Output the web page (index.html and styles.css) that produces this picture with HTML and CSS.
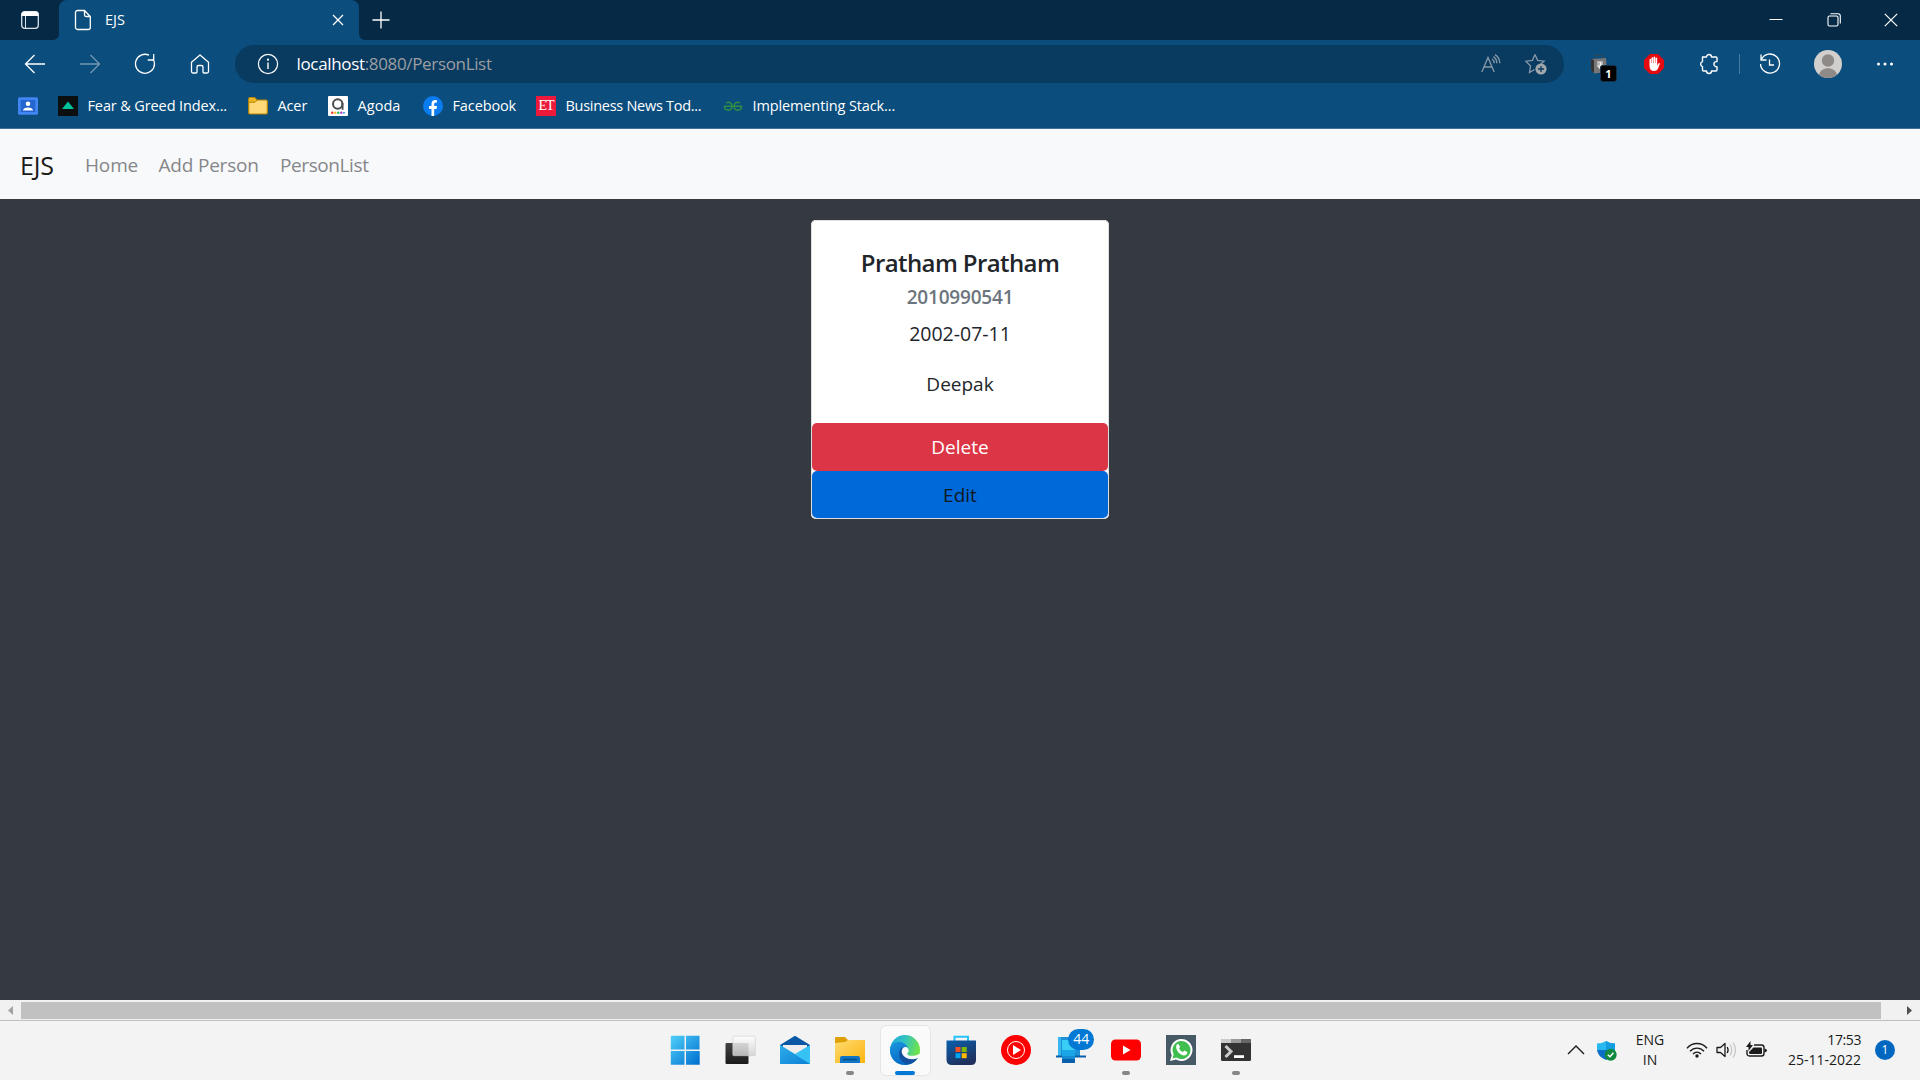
FILE: index.html
```html
<!DOCTYPE html>
<html lang="en">
<head>
<meta charset="utf-8">
<title>EJS</title>
<link rel="stylesheet" href="styles.css">
</head>
<body>
<header class="titlebar">
  <div class="tab-actions">
    <svg width="20" height="20" viewBox="0 0 20 20"><rect x="1.7" y="1.7" width="16.6" height="16.6" rx="3" fill="none" stroke="#dbe2e8" stroke-width="1.3"/><path d="M1.5 6V4.5a3 3 0 0 1 3-3h11a3 3 0 0 1 3 3V6z" fill="#fff"/><path d="M5.5 6v12" stroke="#dbe2e8"/></svg>
  </div>
  <div class="tab">
    <svg width="18" height="22" viewBox="0 0 18 22" fill="none" stroke="#fff" stroke-width="1.3"><path d="M3.5 1.5h7l5.800 6v11a2 2 0 0 1-2 2H3.500a2 2 0 0 1-2-2v-15a2 2 0 0 1 2-2zM10.500 1.500v4.500a1.500 1.500 0 0 0 1.500 1.500h4.300"/></svg>
    <span class="tab-title">EJS</span>
    <svg class="tab-close" width="12" height="12" viewBox="0 0 12 12"><path d="M1 1l10 10M11 1L1 11" stroke="#fff" stroke-width="1.3"/></svg>
  </div>
  <svg class="new-tab" width="18" height="18" viewBox="0 0 18 18"><path d="M9 .5v17M.5 9h17" stroke="#fff" stroke-width="1.3"/></svg>
  <div class="window-buttons">
    <svg width="14" height="14" viewBox="0 0 14 14"><path d="M.5 6.500h13" stroke="#fff"/></svg>
    <svg width="14" height="14" viewBox="0 0 14 14" fill="none" stroke="#fff" stroke-width="1.1"><rect x="1" y="3" width="10" height="10" rx="1.500"/><path d="M3.500.8h7.500a2.300 2.300 0 0 1 2.300 2.300v7.400"/></svg>
    <svg width="14" height="14" viewBox="0 0 14 14"><path d="M.8.8l12.400 12.400M13.200.8L.8 13.200" stroke="#fff" stroke-width="1.2"/></svg>
  </div>
</header>

<div class="toolbar">
  <div class="tool"><svg width="22" height="20" viewBox="0 0 22 20" fill="none" stroke="#fff" stroke-width="1.300"><path d="M21 10H1.500M10.500 1l-9 9 9 9"/></svg></div>
  <div class="tool faded"><svg width="22" height="20" viewBox="0 0 22 20" fill="none" stroke="#fff" stroke-width="1.300"><path d="M1 10h19.500M11.500 1l9 9-9 9"/></svg></div>
  <div class="tool"><svg width="22" height="22" viewBox="0 0 22 22" fill="none" stroke="#fff" stroke-width="1.300"><path d="M15 2.200A9.500 9.500 0 1 0 20.500 11a9.500 9.500 0 0 0-1.700-5.200M19.700 1v6h-6"/></svg></div>
  <div class="tool"><svg width="20" height="20" viewBox="0 0 20 20" fill="none" stroke="#fff" stroke-width="1.300"><path d="M1.500 8.200L10 1l8.500 7.200V17.500a1.500 1.500 0 0 1-1.500 1.500h-3a1 1 0 0 1-1-1v-5a1.500 1.500 0 0 0-1.500-1.500h-3A1.500 1.500 0 0 0 7 13v5a1 1 0 0 1-1 1H3a1.500 1.500 0 0 1-1.500-1.500z" stroke-linejoin="round"/></svg></div>
  <div class="address">
    <svg width="22" height="22" viewBox="0 0 22 22" fill="none" stroke="#fff" stroke-width="1.200"><circle cx="11" cy="11" r="9.600"/><path d="M11 9.500v6.500" stroke-width="1.400"/><circle cx="11" cy="6.700" r=".5" fill="#fff"/></svg>
    <span class="url"><b>localhost</b>:8080/PersonList</span>
    <svg class="read" width="20" height="20" viewBox="0 0 20 20" fill="none" stroke="#8799a8" stroke-width="1.300"><path d="M.8 18L7 3.500 13.200 18M3 13h8M11 5c1.500 1 2.200 2.300 2.200 4.300M12.500 2.600c2.300 1.600 3.300 3.600 3.300 6.700M14 .6c3.200 2 4.800 5 4.800 8.700"/></svg>
    <svg class="fav" width="22" height="22" viewBox="0 0 22 22"><path d="M10 1.500l2.600 5.800 6.500.8-4 3.700M9.500 16.500l-5 3 1-6.500L.9 8.200l6.500-.9L10 1.500" fill="none" stroke="#8799a8" stroke-width="1.300"/><circle cx="16" cy="16" r="5.600" fill="#a0a6ab"/><path d="M16 13v6M13 16h6" stroke="#0a3a5f" stroke-width="1.300"/></svg>
  </div>
  <div class="extension">
    <svg width="18" height="20" viewBox="0 0 18 20"><path d="M5 5V1.500h8V5" stroke="#444" fill="none" stroke-dasharray="2 1"/><path d="M1 5l15-1 1 14-13 1.500L1 15z" fill="#777"/><path d="M1 5l3 1v13l-3-3z" fill="#333"/><path d="M7 8h6M7 10h6M8 8c4 0 4 4 0 4l3.500 4" fill="none" stroke="#eee" stroke-width="1.200"/></svg>
    <span class="ext-badge">1</span>
  </div>
  <div class="tool"><svg width="20" height="20" viewBox="0 0 20 20"><path d="M6 0h8l6 6v8l-6 6H6l-6-6V6z" fill="#e40b10"/><path d="M5.500 10.500V5.200q.8-.9 1.500 0V9l.4 0V3.700q.9-1 1.700 0V9h.4V3q.9-.9 1.700 0v6h.4V4q.9-.9 1.600 0v7.500l1.200-2q1-1 1.600.1L13.800 15q-1 2-3.600 2-4.700 0-4.700-5z" fill="#fff"/></svg></div>
  <div class="tool"><svg width="20" height="22" viewBox="0 0 20 22" fill="none" stroke="#fff" stroke-width="1.400" stroke-linejoin="round"><path d="M3.500 4H7.500a2.500 2.500 0 0 1 5 0H17q1 0 1 1v3.600h-1a2.600 2.600 0 0 0 0 5.100h1V17q0 1-1 1h-4.500a2.500 2.500 0 0 1-5 0H4.500q-1 0-1-1v-3.400a2.600 2.600 0 0 1 0-5V4z"/></svg></div>
  <i class="divider"></i>
  <div class="tool history"><svg width="22" height="22" viewBox="0 0 22 22" fill="none" stroke="#fff" stroke-width="1.300"><path d="M2 1.500V7h5.500M2.300 6.700A9.500 9.500 0 1 1 1.500 11M10.500 6.500V12h4.500"/></svg></div>
  <div class="avatar"><svg width="28" height="28" viewBox="0 0 28 28"><circle cx="14" cy="14" r="14" fill="#d2d0ce"/><circle cx="14" cy="10.500" r="6.200" fill="#8d8a88"/><path d="M5 24.700c1-4.200 4.500-6.500 9-6.500s8 2.300 9 6.500a14 14 0 0 1-18 0z" fill="#8d8a88"/></svg></div>
  <div class="tool"><svg width="18" height="4" viewBox="0 0 18 4" fill="#fff"><circle cx="2.500" cy="2" r="1.500"/><circle cx="9" cy="2" r="1.500"/><circle cx="15.500" cy="2" r="1.500"/></svg></div>
</div>

<nav class="bookmarks">
  <a class="bm bm-contact"><svg width="20" height="20" viewBox="0 0 20 20"><rect y="1.300" width="20" height="17.400" rx="1.500" fill="#4285f4"/><rect x="2.700" y="4" width="14.600" height="12" fill="#2565cf"/><circle cx="10" cy="7.700" r="2.300" fill="#fff"/><path d="M5 14.500c0-4 10-4 10 0z" fill="#fff"/></svg></a>
  <a class="bm bm-fear"><svg width="20" height="20" viewBox="0 0 20 20"><path d="M0 0h20v20H0z" fill="#0b0f10"/><path d="M10 5.500l6 7.500H4z" fill="#00c29a"/></svg><span>Fear &amp; Greed Index...</span></a>
  <a class="bm bm-acer"><svg width="20" height="20" viewBox="0 0 20 20"><path d="M.7 3q0-1.300 1.300-1.300h4.500L9 4h9q1.300 0 1.300 1.300v11.400q0 1.300-1.300 1.300H2q-1.300 0-1.300-1.300z" fill="#ffd977" stroke="#b98400" stroke-width="1.200"/><path d="M1.300 2.300h5L8 4 6.500 6H1.300z" fill="#e9b422"/><path d="M1 6.300h6L9 4" fill="none" stroke="#b98400"/></svg><span>Acer</span></a>
  <a class="bm bm-agoda"><svg width="20" height="20" viewBox="0 0 20 20"><rect width="20" height="20" rx="1" fill="#fff"/><circle cx="9.700" cy="8" r="4.700" fill="none" stroke="#4c4d4f" stroke-width="2"/><path d="M14.600 7v6.800" stroke="#4c4d4f" stroke-width="1.800"/><g><circle cx="4.300" cy="16.700" r="1.200" fill="#e32"/><circle cx="7.300" cy="16.700" r="1.200" fill="#fb2"/><circle cx="10.300" cy="16.700" r="1.200" fill="#2b5"/><circle cx="13.300" cy="16.700" r="1.200" fill="#a4c"/><circle cx="16" cy="16.700" r="1" fill="#39d"/></g></svg><span>Agoda</span></a>
  <a class="bm bm-facebook"><svg width="20" height="20" viewBox="0 0 20 20"><circle cx="10" cy="10" r="10" fill="#0a7cf0"/><path d="M8.500 20v-7H6v-3h2.500V7.800C8.500 5.300 10 4 12.200 4l1.800.2v2.400h-1.300q-1.500 0-1.500 1.500V10H14l-.5 3h-2.300v7z" fill="#fff"/></svg><span>Facebook</span></a>
  <a class="bm bm-news"><span class="et-logo">ET</span><span>Business News Tod...</span></a>
  <a class="bm bm-stack"><svg width="20" height="20" viewBox="0 0 20 20" fill="none" stroke="#2f8d46" stroke-width="1.500"><path d="M3 7.200c3-2 6-.3 6 3s-2.500 4.300-4.700 3.800S1.300 12 1.500 10.300h17c.2 1.700-.600 3.200-2.800 3.700S11 13.500 11 10.200s3-5 6-3"/></svg><span>Implementing Stack...</span></a>
</nav>

<main class="page">
  <nav class="navbar">
    <a class="brand">EJS</a><a class="nl n1">Home</a><a class="nl n2">Add Person</a><a class="nl">PersonList</a>
  </nav>
  <section class="card">
    <div class="card-body">
      <h5>Pratham Pratham</h5>
      <h6>2010990541</h6>
      <p class="dob">2002-07-11</p>
      <p class="guardian">Deepak</p>
    </div>
    <a class="btn btn-danger">Delete</a>
    <a class="btn btn-primary">Edit</a>
  </section>
</main>

<div class="scrollbar">
  <svg width="21" height="20" viewBox="0 0 21 20"><path d="M13 6v9l-5-4.500z" fill="#a3a3a3"/></svg>
  <i class="thumb"></i>
  <svg width="39" height="20" viewBox="0 0 39 20"><path d="M26 6v9l5-4.500z" fill="#505050"/></svg>
</div>

<footer class="taskbar">
  <div class="apps">
    <div class="app"><svg width="30" height="30" viewBox="0 0 30 30"><defs><linearGradient id="win" x1="0" y1="0" x2="29" y2="29" gradientUnits="userSpaceOnUse"><stop offset="0" stop-color="#52d3fb"/><stop offset="1" stop-color="#0070d0"/></linearGradient></defs><path d="M1.500.8H14.500V14.500H.8v-13zM16 .8h13.500v13.700H16zM.8 16h13.700v13.700H.8zM16 16h13.700v13.700H16z" fill="url(#win)"/></svg></div>
    <div class="app"><svg width="32" height="30" viewBox="0 0 32 30"><defs><linearGradient id="tv" x2="0" y2="1"><stop stop-color="#444"/><stop offset="1" stop-color="#1a1a1a"/></linearGradient><linearGradient id="tv2" x2="0" y2="1"><stop stop-color="#fff" stop-opacity=".85"/><stop offset="1" stop-color="#d0d0d0" stop-opacity=".85"/></linearGradient></defs><rect x="1.500" y="8" width="23" height="21" rx="1" fill="url(#tv)"/><rect x="8.800" y="1.200" width="22.500" height="19.500" rx="1" fill="url(#tv2)" stroke="#ccc" stroke-width=".6"/></svg></div>
    <div class="app"><svg width="30" height="30" viewBox="0 0 30 30"><defs><linearGradient id="ml" x2="1" y2="1"><stop stop-color="#2daee9"/><stop offset="1" stop-color="#0d7fd5"/></linearGradient></defs><path d="M0 10L13 2q2-2 4 0l13 8v5H0z" fill="#0a57a5"/><path d="M3 10h24v10H3z" fill="#eee"/><path d="M0 10l15 9 15-9v19H0z" fill="#36c3f4"/><path d="M0 10l30 19H0z" fill="url(#ml)"/></svg></div>
    <div class="app running"><svg width="30" height="30" viewBox="0 0 30 30"><defs><linearGradient id="fo" x2="1" y2="1"><stop stop-color="#ffdb71"/><stop offset="1" stop-color="#fbb40f"/></linearGradient></defs><path d="M0 3q0-1 1-1h9l3 3v6H0z" fill="#dfa005"/><path d="M0 8l10-1 3-2h17v23H0z" fill="url(#fo)"/><path d="M5 28v-5q0-2 2-2h16q2 0 2 2v5z" fill="#0f75c4"/><path d="M8 24.500h14" stroke="#084f8b" stroke-width="1.500"/></svg></div>
    <div class="app active"><svg width="30" height="30" viewBox="0 0 30 30"><defs><linearGradient id="e1" x2="1" y2=".3"><stop stop-color="#1ba5df"/><stop offset=".5" stop-color="#32c3c0"/><stop offset="1" stop-color="#70e349"/></linearGradient><linearGradient id="e2" x2=".5" y2="1"><stop stop-color="#1996df"/><stop offset="1" stop-color="#0768c5"/></linearGradient></defs><circle cx="15" cy="15" r="15" fill="url(#e1)"/><path d="M0 14C1 8.500 6 6.500 10 7c5 .5 8 4 8 7.500-2-2-5-1.500-6 1-1 3 1 7 5.500 8.500 4.300 1 8.500-.5 10.500-1.500C25 27.500 20.500 30 15 30 6 30-.5 23 0 14z" fill="url(#e2)"/><path d="M12 12.500C7.500 16 8 25.500 15.500 28.500c5 1.500 9.500-1.500 12.500-6-4 2-10 2-13-1.500-3-3-3-6-1.500-8.500z" fill="#124f9e"/><path d="M11.700 16c.4-4 5-5.500 6.700-1.800.8 2-.5 3.300-1.200 4.300-.5 2.500 6 3.500 11.800.4l1.500 1q-1 2-2.500 3c-3.300 1.600-7 1.600-10.300.6-4-1.500-6.300-4.500-6-7.500z" fill="#fafafa"/></svg></div>
    <div class="app"><svg width="30" height="30" viewBox="0 0 30 30"><defs><linearGradient id="st" x2=".5" y2="1"><stop stop-color="#0a5fae"/><stop offset="1" stop-color="#20305c"/></linearGradient></defs><path d="M8.500 6V1.800h13.500V6" fill="none" stroke="#24c3fa" stroke-width="2"/><path d="M.5 5.500h29.500V25q0 5-5 5H6q-5.500 0-5.500-5z" fill="url(#st)"/><path d="M9.500 12h5v5h-5z" fill="#f25022"/><path d="M15.700 12h5v5h-5z" fill="#7fba00"/><path d="M9.500 18.200h5v5h-5z" fill="#00a4ef"/><path d="M15.700 18.200h5v5h-5z" fill="#ffb900"/></svg></div>
    <div class="app"><svg width="30" height="30" viewBox="0 0 30 30"><circle cx="15" cy="15" r="15" fill="#f00"/><circle cx="15" cy="15" r="8.500" fill="none" stroke="#fff" stroke-width="1"/><path d="M12 10l8 5-8 5z" fill="#fff"/></svg></div>
    <div class="app"><svg width="30" height="30" viewBox="0 0 30 30"><path d="M2 2h22v20H2z" fill="#1c91d6"/><path d="M2 2h3v20H2z" fill="#36b5ee"/><path d="M0 20.500h30V22.500H0z" fill="#075fab"/><path d="M6 6h13v22H6z" fill="#148bd3"/><path d="M6 5h13v10H6z" fill="#38cdf5"/><path d="M6 15h13v6H6z" fill="#1aa5e7"/><path d="M6 24h13v4H6z" fill="#075fab"/></svg><span class="count">44</span></div>
    <div class="app running"><svg width="30" height="30" viewBox="0 0 30 30"><rect y="4.500" width="30" height="21" rx="4.500" fill="#f00"/><path d="M12 10.500l7.500 4.500-7.500 4.500z" fill="#fff"/></svg></div>
    <div class="app"><svg width="30" height="30" viewBox="0 0 30 30"><path d="M0 0h30v30H0z" fill="#455a64"/><path d="M4 26l1.700-6A11 11 0 1 1 10 24.500z" fill="#fff"/><path d="M6.500 23.500l1.200-4A9 9 0 1 1 10.500 22.500z" fill="#3fbf4f"/><path d="M10.500 10q1-1.500 2.300-.6l1.200 2.700-1 1.500q1.200 2.600 4 3.500l1.300-1.500 3 1.400q.4 1.800-1.500 3c-3.500 2-11.300-4-9.300-10z" fill="#fff"/></svg></div>
    <div class="app running"><svg width="30" height="30" viewBox="0 0 30 30"><rect y="4" width="30" height="22" rx="1.500" fill="#333"/><path d="M0 8V5q0-1 1-1h9v4z" fill="#ccc"/><path d="M10 4h10v4H10z" fill="#999"/><path d="M20 4h9q1 0 1 1v3H20z" fill="#666"/><path d="M4.500 11l5.500 5.500-5.500 5.500" fill="none" stroke="#ccc" stroke-width="3"/><path d="M13 20.200h10v2.800H13z" fill="#fff"/></svg></div>
  </div>
  <div class="tray">
    <svg width="18" height="12" viewBox="0 0 18 12"><path d="M1 10l8-8 8 8" fill="none" stroke="#1b1b1b" stroke-width="1.400"/></svg>
    <svg class="shield" width="21" height="21" viewBox="0 0 21 21"><path d="M10 1q4 2.500 9 2.500V10H1V3.500Q6 3.500 10 1z" fill="#28b7ee"/><path d="M10 1q4 2.500 9 2.500V10h-9z" fill="#159be0"/><path d="M1 10h18q-1 7-9 10-8-3-9-10z" fill="#0c6fc7"/><circle cx="14.700" cy="14.700" r="6" fill="#10893e"/><path d="M11.800 14.800l2.200 2 3.500-4" fill="none" stroke="#fff" stroke-width="1.500"/></svg>
    <div class="lang"><span>ENG</span><span>IN</span></div>
    <svg class="wifi" width="22" height="18" viewBox="0 0 22 18" fill="none" stroke="#1b1b1b" stroke-width="1.400"><path d="M1 7.200c5.500-6.200 14.500-6.200 20 0M4 10.300c4-4.300 10-4.300 14 0M7 13c2.500-2.500 5.500-2.500 8 0"/><circle cx="11" cy="15" r="1.700" fill="#1b1b1b" stroke="none"/></svg>
    <svg class="volume" width="21" height="18" viewBox="0 0 21 18" fill="none" stroke="#1b1b1b" stroke-width="1.300"><path d="M1 6.500h3.500L9 2.500v13l-4.500-4H1z" stroke-linejoin="round"/><path d="M11.200 6q1.800 3 0 6"/><path d="M14 3.500q3.500 5.500 0 11M17 1.500q5 7.500 0 15" stroke="#c5c5c5"/></svg>
    <svg class="battery" width="21" height="18" viewBox="0 0 21 18"><path d="M8 4h7.500q2.500 0 2.500 2.500v6q0 2.500-2.500 2.500h-12Q1 15 1 12.500V9" fill="none" stroke="#1b1b1b" stroke-width="1.400"/><path d="M7.500 6.500H15q1 0 1 1v4.500q0 1-1 1H4.500q-1.500 0-1.500-1V11z" fill="#1b1b1b"/><path d="M18.500 7.500q2.500.5 2.500 2t-2.500 2zM4.500 0v4H7L2.500 10V6H0z" fill="#1b1b1b"/></svg>
    <div class="clock"><span class="time">17:53</span><span>25-11-2022</span></div>
    <span class="notice">1</span>
  </div>
</footer>
</body>
</html>
```
FILE: styles.css
```css
* { box-sizing: border-box; }
body {
  margin: 0;
  width: 1920px;
  height: 1080px;
  overflow: hidden;
  display: flex;
  flex-direction: column;
  font-family: "Open Sans", "Noto Sans", sans-serif;
  font-size: 14.500px;
  color: #fff;
  white-space: nowrap;
}
svg { display: block; flex: none; }

/* Window title bar */
.titlebar { height: 40px; flex: none; display: flex; align-items: center; background: #0b4d7d; }
.tab-actions { width: 59px; height: 40px; display: flex; align-items: center; padding-left: 20px; background: #062a46; border-radius: 0 0 6px 0; }
.tab { width: 300px; height: 40px; display: flex; align-items: center; padding: 0 15px; background: #0b4d7d; border-radius: 8px 8px 0 0; box-shadow: 0 -8px 0 #062a46; }
.tab-title { margin-left: 13px; padding-bottom: 2px; }
.tab-close { margin-left: auto; }
.titlebar .new-tab { background: #062a46; box-sizing: content-box; padding: 11px 13px; border-radius: 0 0 0 6px; }
.window-buttons { flex: 1; height: 40px; display: flex; align-items: center; justify-content: flex-end; gap: 43.500px; padding-right: 22px; background: #062a46; }

/* Toolbar */
.toolbar { height: 47px; flex: none; display: flex; align-items: center; padding-left: 7.500px; background: #0b4d7d; }
.tool { width: 55px; display: flex; justify-content: center; }
.faded { opacity: .42; }
.address { width: 1329px; height: 38px; margin-left: 7.500px; display: flex; align-items: center; padding: 0 17px 0 21.500px; background: #093a5f; border-radius: 19px; }
.url { margin-left: 18px; padding-bottom: 1px; font-size: 17px; letter-spacing: -.34px; color: #9c9fa2; }
.url b { font-weight: 400; color: #fff; }
.read { margin-left: auto; }
.fav { margin-left: 24px; }
.extension { position: relative; width: 62px; padding-left: 26px; }
.ext-badge { position: absolute; left: 36px; top: 11px; width: 17px; height: 17px; border: 1px solid #17304a; border-radius: 3px; background: #000; font: 700 11px/15px "Open Sans", sans-serif; text-align: center; }
.divider { width: 1px; height: 20px; background: #477a9f; margin-left: 3px; }
.history { margin-left: 2px; }
.avatar { margin: 0 15px 0 17px; }

/* Bookmarks */
.bookmarks { height: 42px; flex: none; display: flex; align-items: center; padding: 0 0 4px 18px; background: #0b4d7d; border-bottom: 1px solid #3c719a; }
.bm { display: flex; align-items: center; gap: 9.500px; flex: none; letter-spacing: -.12px; }
.bm-contact { width: 40px; }
.bm-fear { width: 190px; }
.bm-acer { width: 80px; }
.bm-agoda { width: 95px; letter-spacing: .05px; }
.bm-facebook { width: 113px; }
.bm-news { width: 187px; letter-spacing: -.28px; }
.et-logo { width: 20px; height: 20px; background: #ed193b; font: 14px/20px "Liberation Serif", serif; text-align: center; letter-spacing: -1px; }

/* Web page */
.page { height: 871px; flex: none; background: #343a40; overflow: hidden; color: #212529; font-size: 19px; }
.navbar { height: 70px; display: flex; align-items: center; padding: 2px 0 0 20px; background: #f8f9fa; }
.brand { width: 65px; padding-bottom: 1px; font-size: 25px; letter-spacing: -.2px; color: #1b1b1b; }
.nl { color: #85878a; letter-spacing: -.15px; }
.nl:last-child { letter-spacing: -.4px; }
.n1 { width: 73.500px; }
.n2 { width: 121.500px; letter-spacing: -.2px; }
.card { width: 298px; height: 299px; margin: 21px auto 0; padding: 1px; display: flex; flex-direction: column; background: #fff; border-radius: 5px; text-align: center; box-shadow: inset 0 0 0 1px #dcddde; }
.card-body { height: 202px; padding-top: 27px; }
h5, h6, p { margin: 0; }
h5 { font-size: 24px; line-height: 30px; font-weight: 600; letter-spacing: -.6px; }
h6 { font-size: 19px; line-height: 24px; margin-top: 7px; font-weight: 600; letter-spacing: -.2px; color: #6c757d; }
.dob { font-size: 19.500px; line-height: 30px; margin-top: 10px; }
.guardian { line-height: 30px; margin-top: 20px; }
.btn { flex: 1; display: flex; align-items: center; justify-content: center; padding-top: 1px; border-radius: 5px; }
.btn-danger { background: #dc3545; color: #fff; }
.btn-primary { background: #0069d9; color: #101820; }

/* Horizontal scrollbar */
.scrollbar { height: 21px; flex: none; display: flex; background: #f1f1f1; border-bottom: 1px solid #bfbfbf; }
.thumb { flex: 1; margin: 2px 0 1px; background: #c1c1c1; }

/* Taskbar */
.taskbar { height: 59px; padding-bottom: 1px; display: grid; grid-template-columns: 1fr auto 1fr; background: #f3f3f3; color: #1b1b1b; }
.apps { grid-column: 2; display: flex; align-items: center; gap: 6.100px; padding-left: 1px; }
.app { position: relative; width: 49px; height: 49px; display: flex; align-items: center; justify-content: center; border-radius: 5px; }
.active { background: #fafafa; box-shadow: 0 0 0 1px #e6e6e6; }
.running::after, .active::after { content: ""; position: absolute; left: 20.500px; bottom: 0; width: 8px; height: 4px; border-radius: 2px; background: #868686; }
.active::after { left: 14.500px; width: 20px; background: #0078d7; }
.count { position: absolute; left: 22px; top: 3px; width: 26px; height: 21px; border-radius: 11px; background: #0078d4; color: #fff; font-size: 14px; line-height: 20px; text-align: center; }
.tray { justify-self: end; display: flex; align-items: center; padding-right: 25px; }
.shield { margin-left: 11px; }
.lang, .clock { display: flex; flex-direction: column; padding-bottom: 1px; font-size: 14px; line-height: 20px; }
.lang { width: 32px; margin-left: 17px; align-items: center; }
.wifi { margin-left: 20px; }
.volume { margin-left: 8px; }
.battery { margin-left: 9px; }
.clock { width: 94px; align-items: flex-end; }
.time { letter-spacing: -.4px; }
.notice { width: 20px; height: 20px; margin-left: 14px; border-radius: 50%; background: #0067c0; color: #fff; font-size: 12px; line-height: 20px; text-align: center; }
```
